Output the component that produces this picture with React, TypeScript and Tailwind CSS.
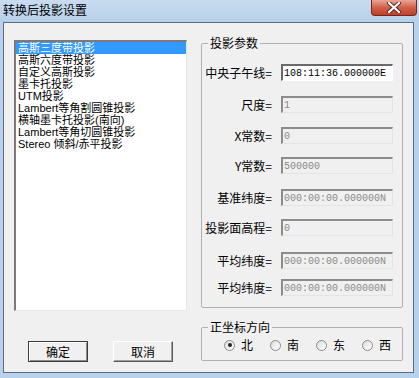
import React from 'react';

const cjk = "font-['Noto_Sans_CJK_SC',sans-serif]";
const listFont = "font-['Liberation_Sans','Noto_Sans_CJK_SC',sans-serif]";
const mono = "font-['Liberation_Mono','Noto_Sans_CJK_SC',monospace]";

const projections = [
  '高斯三度带投影',
  '高斯六度带投影',
  '自定义高斯投影',
  '墨卡托投影',
  'UTM投影',
  'Lambert等角割圆锥投影',
  '横轴墨卡托投影(南向)',
  'Lambert等角切圆锥投影',
  'Stereo 倾斜/赤平投影',
];

const params = [
  { label: '中央子午线=', value: '108:11:36.000000E', enabled: true, mt: 'mt-[14px]' },
  { label: '尺度=', value: '1', mt: 'mt-[15px]' },
  { label: 'X常数=', value: '0', mt: 'mt-[14px]' },
  { label: 'Y常数=', value: '500000', mt: 'mt-[13px]' },
  { label: '基准纬度=', value: '000:00:00.000000N', mt: 'mt-[15px]' },
  { label: '投影面高程=', value: '0', mt: 'mt-[13px]' },
  { label: '平均纬度=', value: '000:00:00.000000N', mt: 'mt-[16px]' },
  { label: '平均纬度=', value: '000:00:00.000000N', mt: 'mt-[10px]' },
];

function Radio({ label, checked }: { label: string; checked?: boolean }) {
  return (
    <div className="flex items-center gap-[6px]">
      <span className="w-[11px] h-[11px] rounded-full border border-[#8a8a8a] bg-gradient-to-br from-[#dcdcdc] to-white flex items-center justify-center">
        {checked && <span className="w-[4px] h-[4px] rounded-full bg-[#222]" />}
      </span>
      <span className="text-[12px] leading-[14px] text-black">{label}</span>
    </div>
  );
}

export default function App() {
  return (
    <div className={`w-[419px] h-[378px] bg-[#b9d1ea] flex flex-col ${cjk}`}>
      {/* title bar */}
      <div className="h-[22px] flex items-start bg-gradient-to-b from-[#c9dcf0] to-[#b7cfe9]">
        <span className="ml-[3px] mt-[3px] text-[12px] leading-[14px] text-black">转换后投影设置</span>
        <div className="ml-auto mr-[2px] w-[46px] h-[16px] rounded-b-[4px] border border-t-0 border-[#6e2a20] bg-gradient-to-b from-[#e8a593] via-[#d0604a] to-[#c13d26] flex items-center justify-center">
          <svg width="14" height="11" viewBox="0 0 14 11">
            <path d="M2 1 L12 10 M12 1 L2 10" stroke="#4a2a2a" strokeWidth="4" strokeLinecap="round" />
            <path d="M2 1 L12 10 M12 1 L2 10" stroke="#fff" strokeWidth="2.2" strokeLinecap="round" />
          </svg>
        </div>
      </div>

      {/* client area */}
      <div className="flex-1 ml-[3px] mr-[5px] mb-[5px] bg-[#f0f0f0] border border-[#5a6c80] flex pl-[10px] pt-[17px]">
        {/* left column */}
        <div className="w-[173px] flex flex-col">
          <div className={`h-[271px] bg-white border-t-2 border-l-2 border-[#7a7a7a] border-b border-r border-b-[#e8e8e8] border-r-[#e8e8e8] ${listFont}`}>
            {projections.map((p, i) => (
              <div
                key={i}
                className={`h-[12px] leading-[12px] text-[11px] pl-[2px] whitespace-nowrap ${i === 0 ? 'bg-[#3399ff] text-white' : 'text-black'}`}
              >
                {p}
              </div>
            ))}
          </div>
          <div className="flex mt-[30px] pl-[14px] gap-[25px]">
            <button className="w-[60px] h-[21px] border border-[#3c3c3c] bg-[#f0f0f0] shadow-[inset_1px_1px_0_#ffffff,inset_-1px_-1px_0_#8a8a8a] text-[12px] leading-[14px] text-black">
              确定
            </button>
            <button className="w-[60px] h-[21px] border border-t-white border-l-white border-b-[#5a5a5a] border-r-[#5a5a5a] bg-[#f0f0f0] shadow-[inset_-1px_-1px_0_#a0a0a0] text-[12px] leading-[14px] text-black">
              取消
            </button>
          </div>
        </div>

        {/* right column */}
        <div className="ml-[14px] -mt-[4px] w-[202px] flex flex-col">
          <fieldset className="h-[272px] border border-[#b0b0b0] rounded-[2px] px-0">
            <legend className="ml-[6px] px-[2px] text-[12px] leading-[14px] text-black">投影参数</legend>
            {params.map((p, i) => (
              <div key={i} className={`flex items-center ${p.mt}`}>
                <span className="w-[70px] text-right text-[12px] leading-[17px] whitespace-nowrap text-black">{p.label}</span>
                <div
                  className={`ml-[9px] w-[112px] h-[17px] border-t-2 border-l-2 border-b border-r flex items-center pl-[1px] ${mono} text-[10px] ${
                    p.enabled
                      ? 'bg-white border-t-[#6a6a6a] border-l-[#6a6a6a] border-b-white border-r-white text-black'
                      : 'bg-[#f0f0f0] border-t-[#8c8c8c] border-l-[#8c8c8c] border-b-[#e4e4e4] border-r-[#e4e4e4] text-[#8a8a8a]'
                  }`}
                >
                  {p.value}
                </div>
              </div>
            ))}
          </fieldset>

          <fieldset className="mt-[12px] h-[41px] border border-[#b0b0b0] rounded-[2px]">
            <legend className="ml-[6px] px-[2px] text-[12px] leading-[14px] text-black">正坐标方向</legend>
            <div className="flex items-center pl-[22px] mt-[4px] gap-[17px]">
              <Radio label="北" checked />
              <Radio label="南" />
              <Radio label="东" />
              <Radio label="西" />
            </div>
          </fieldset>
        </div>
      </div>
    </div>
  );
}
